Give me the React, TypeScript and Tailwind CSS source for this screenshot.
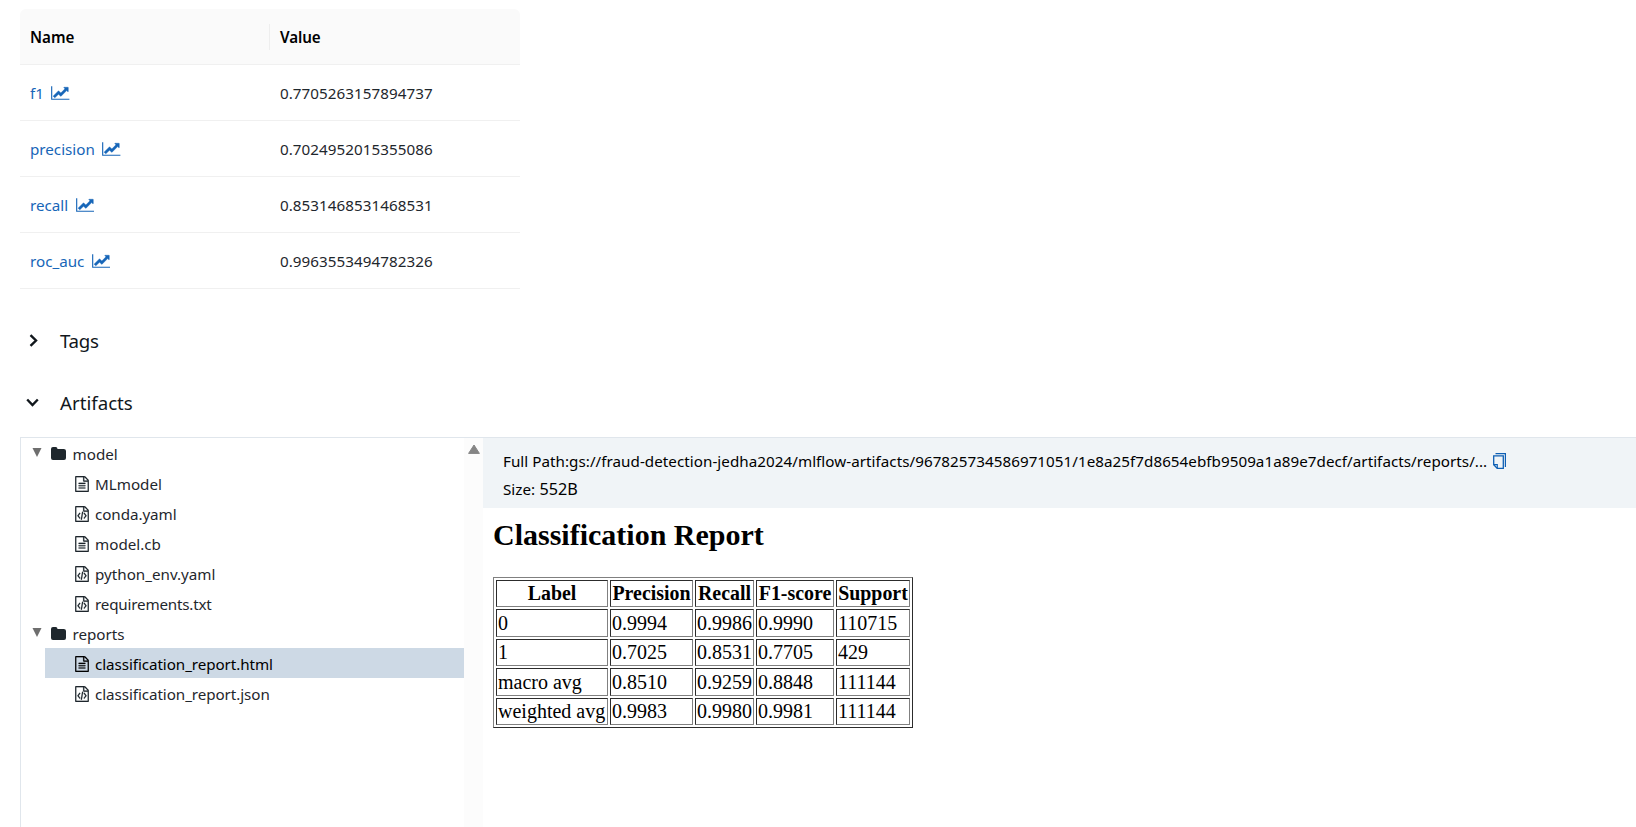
import type { ReactNode } from "react";

const metrics = [
  { name: "f1", value: "0.7705263157894737" },
  { name: "precision", value: "0.7024952015355086" },
  { name: "recall", value: "0.8531468531468531" },
  { name: "roc_auc", value: "0.9963553494782326" },
];

const report = [
  { height: "h-[28px]", cells: ["0", "0.9994", "0.9986", "0.9990", "110715"] },
  { height: "h-[27px]", cells: ["1", "0.7025", "0.8531", "0.7705", "429"] },
  { height: "h-[28px]", cells: ["macro avg", "0.8510", "0.9259", "0.8848", "111144"] },
  { height: "h-[27px]", cells: ["weighted avg", "0.9983", "0.9980", "0.9981", "111144"] },
];

const PAGE_OUTLINE =
  "M1596 380q28 28 48 76t20 88v1152q0 40-28 68t-68 28h-1344q-40 0-68-28t-28-68v-1600q0-40 28-68t68-28h896q40 0 88 20t76 48zm-444-244v376h376q-10-29-22-41l-313-313q-12-12-41-22zm384 1528v-1024h-416q-40 0-68-28t-28-68v-416h-768v1536h1280z";
const TEXT_LINES =
  "m-1024-864q0-14 9-23t23-9h704q14 0 23 9t9 23v64q0 14-9 23t-23 9h-704q-14 0-23-9t-9-23v-64zm736 224q14 0 23 9t9 23v64q0 14-9 23t-23 9h-704q-14 0-23-9t-9-23v-64q0-14 9-23t23-9h704zm0 256q14 0 23 9t9 23v64q0 14-9 23t-23 9h-704q-14 0-23-9t-9-23v-64q0-14 9-23t23-9h704z";
const CODE_MARKS =
  "m-928-896q8-11 21-12.5t24 6.5l51 38q11 8 12.5 21t-6.5 24l-182 243 182 243q8 11 6.5 24t-12.5 21l-51 38q-11 8-24 6.5t-21-12.5l-226-301q-14-19 0-38zm802 301q14 19 0 38l-226 301q-8 11-21 12.5t-24-6.5l-51-38q-11-8-12.5-21t6.5-24l182-243-182-243q-8-11-6.5-24t12.5-21l51-38q11-8 24-6.5t21 12.5zm-620 461q-13-2-20.5-13t-5.5-24l138-831q2-13 13-20.5t24-5.5l63 10q13 2 20.5 13t5.5 24l-138 831q-2 13-13 20.5t-24 5.5z";

function ChartIcon() {
  return (
    <svg viewBox="0 0 2048 1792" className="h-4 w-[18.5px] shrink-0" fill="currentColor">
      <path d="M2048 1536v128h-2048v-1536h128v1408h1920z" />
      <path
        stroke="currentColor"
        strokeWidth="50"
        d="M1920 288v435q0 21-19.5 29.5t-35.5-7.5l-121-121-633 633q-10 10-23 10t-23-10l-233-233-416 416-192-192 585-585q10-10 23-10t23 10l233 233 464-464-121-121q-16-16-7.5-35.5t29.5-19.5h435q14 0 23 9t9 23z"
      />
    </svg>
  );
}

function FileIcon({ code }: { code: boolean }) {
  return (
    <svg viewBox="128 0 1536 1792" className="mt-0.5 h-4 w-[14px] shrink-0" fill="currentColor" stroke="currentColor" strokeWidth="20">
      <path d={PAGE_OUTLINE + (code ? CODE_MARKS : TEXT_LINES)} />
    </svg>
  );
}

function FolderIcon() {
  return (
    <svg viewBox="0 0 15 13" className="h-[13px] w-[15px] shrink-0" fill="currentColor">
      <path d="M0 2Q0 0 2 0H4.7Q6.5 0 6.5 2H12.8Q15 2 15 4V11Q15 13 13 13H2Q0 13 0 11Z" />
    </svg>
  );
}

function CopyIcon() {
  return (
    <svg viewBox="0 0 13 16" className="h-4 w-[13px] shrink-0" fill="none" stroke="#0e5fb4">
      <path d="M2.5 .6H12.4V14" strokeWidth="1.2" />
      <path d="M.7 2.8H10.3V15.3H4.2L.7 11.8Z" strokeWidth="1.3" />
      <path d="M.7 11.6H4.3V15.3" strokeWidth="1.1" />
    </svg>
  );
}

function Folder({ name, children }: { name: string; children: ReactNode }) {
  return (
    <div>
      <div className="flex h-[30px] items-center pl-[11px]">
        <svg viewBox="0 0 10 9" className="mb-px h-[9px] w-[10px]" fill="#6e6e6e">
          <path d="M.5 0H9.5L5 9Z" />
        </svg>
        <span className="ml-[9px] flex"><FolderIcon /></span>
        <span className="ml-[6.5px] pt-px">{name}</span>
      </div>
      {children}
    </div>
  );
}

function FileRow({ name, code = false, selected = false, spacing = "" }: { name: string; code?: boolean; selected?: boolean; spacing?: string }) {
  return (
    <div className={`ml-6 flex h-[30px] items-center gap-[6px] pl-[30px] ${selected ? "bg-[#cdd9e5] text-black" : ""}`}>
      <FileIcon code={code} />
      <span className={`pt-px ${spacing}`}>{name}</span>
    </div>
  );
}

export default function App() {
  return (
    <div className="flex h-[827px] w-full flex-col overflow-hidden bg-white pl-5 pt-[9px] font-['Noto_Sans','Open_Sans',sans-serif] text-[15.2px] leading-6 text-[#1f272d]">
      <div className="w-[500px] shrink-0">
        <div className="flex h-14 items-center rounded-t-md border-b border-[#f0f0f0] bg-[#fafafa] font-semibold text-black">
          <div className="flex h-[26px] w-[250px] items-center border-r border-[#eeeeee] pl-2.5">Name</div>
          <div className="pl-2.5 tracking-[-0.1px]">Value</div>
        </div>
        {metrics.map((m) => (
          <div key={m.name} className="flex h-14 items-center border-b border-[#f0f0f0]">
            <div className="flex w-[250px] items-center gap-[7.5px] pl-2.5 text-[#1766b8]">
              {m.name}
              <ChartIcon />
            </div>
            <div className="pl-2.5 tracking-[0.05px]">{m.value}</div>
          </div>
        ))}
      </div>

      <div className="mt-[36px] flex h-8 shrink-0 items-center text-[18.7px] text-[#11171c]">
        <svg viewBox="0 0 20 20" className="ml-[3px] h-5 w-5" fill="none" stroke="currentColor" strokeWidth="2.4">
          <path d="M7.5 4.2L13 9.5L7.5 14.8" />
        </svg>
        <span className="ml-[17px] tracking-[-0.3px]">Tags</span>
      </div>
      <div className="mt-[30px] flex h-8 shrink-0 items-center text-[18.7px] text-[#11171c]">
        <svg viewBox="0 0 20 20" className="ml-[3px] h-5 w-5" fill="none" stroke="currentColor" strokeWidth="2.4">
          <path d="M4.2 6.5L9.5 12L14.8 6.5" />
        </svg>
        <span className="ml-[17px]">Artifacts</span>
      </div>

      <div className="mt-[18px] flex min-h-0 flex-1 border-l border-t border-[#e0e6ec]">
        <div className="w-[443px] shrink-0">
          <Folder name="model">
            <FileRow name="MLmodel" />
            <FileRow name="conda.yaml" code spacing="tracking-[-0.06px]" />
            <FileRow name="model.cb" />
            <FileRow name="python_env.yaml" code />
            <FileRow name="requirements.txt" code spacing="tracking-[-0.19px]" />
          </Folder>
          <Folder name="reports">
            <FileRow name="classification_report.html" selected spacing="tracking-[-0.07px]" />
            <FileRow name="classification_report.json" code spacing="tracking-[-0.07px]" />
          </Folder>
        </div>
        <div className="flex w-[19px] shrink-0 justify-center bg-[#fcfcfc] pt-1.5">
          <svg viewBox="0 0 12 10" className="h-2.5 w-3" fill="#858585" stroke="#858585" strokeLinejoin="round">
            <path d="M6 1L11.4 9.4H.6Z" />
          </svg>
        </div>
        <div className="min-w-0 flex-1">
          <div className="h-[70px] bg-[#f0f4f7] pl-5 pt-2.5 text-black">
            <div className="flex h-[26px] items-center whitespace-nowrap">
              <span className="tracking-[0.04px]">Full Path:gs://fraud-detection-jedha2024/mlflow-artifacts/967825734586971051/1e8a25f7d8654ebfb9509a1a89e7decf/artifacts/reports/...</span>
              <span className="ml-[6px]"><CopyIcon /></span>
            </div>
            <div className="mt-px flex h-[28px] items-center">
              <span>Size:</span>
              <span className="ml-[4.5px] text-[16.2px]">552B</span>
            </div>
          </div>
          <div className="pl-2.5 font-['Liberation_Serif',serif] text-black">
            <h2 className="h-[69px] pt-[9px] text-[30px] font-bold leading-[36px]">Classification Report</h2>
            <table className="w-[420px] table-fixed border-separate border-spacing-[2px] border border-b-[#2c2c2c] border-l-[#808080] border-r-[#2c2c2c] border-t-[#808080] text-[20px] leading-[25px]">
              <colgroup>
                <col className="w-[112px]" />
                <col className="w-[83px]" />
                <col className="w-[59px]" />
                <col className="w-[78px]" />
                <col className="w-[74px]" />
              </colgroup>
              <thead>
                <tr className="h-[27px]">
                  {["Label", "Precision", "Recall", "F1-score", "Support"].map((h) => (
                    <th key={h} className="border border-b-[#808080] border-l-[#2c2c2c] border-r-[#808080] border-t-[#2c2c2c] px-0 py-0 text-[19.9px] font-bold">{h}</th>
                  ))}
                </tr>
              </thead>
              <tbody>
                {report.map((row) => (
                  <tr key={row.cells[0]} className={row.height}>
                    {row.cells.map((cell, i) => (
                      <td key={i} className="whitespace-nowrap border border-b-[#808080] border-l-[#2c2c2c] border-r-[#808080] border-t-[#2c2c2c] px-px py-0">{cell}</td>
                    ))}
                  </tr>
                ))}
              </tbody>
            </table>
          </div>
        </div>
      </div>
    </div>
  );
}
